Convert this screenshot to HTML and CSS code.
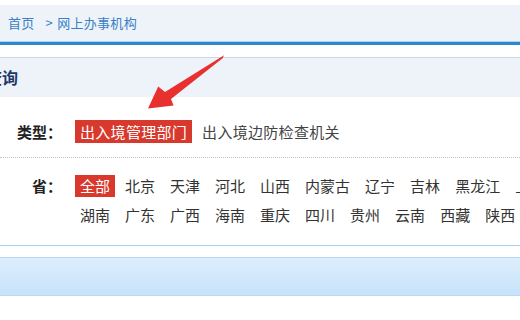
FILE: index.html
```html
<!DOCTYPE html>
<html lang="zh-CN">
<head>
<meta charset="utf-8">
<title>网上办事机构</title>
<link rel="stylesheet" href="styles.css">
</head>
<body>
<div class="page">
  <div class="crumb">
    <a class="crumb-link">首页</a><span class="crumb-sep">&gt;</span><a class="crumb-link">网上办事机构</a>
  </div>
  <div class="rule"></div>
  <div class="panel-head"><h2 class="panel-title">查询</h2></div>
  <div class="filters">
    <div class="frow frow-type">
      <div class="flabel">类型：</div>
      <div class="opts">
        <span class="opt opt-on">出入境管理部门</span>
        <span class="opt">出入境边防检查机关</span>
      </div>
    </div>
    <div class="frow frow-prov">
      <div class="flabel">省：</div>
      <div class="opts">
        <span class="opt opt-on">全部</span>
        <span class="opt">北京</span>
        <span class="opt">天津</span>
        <span class="opt">河北</span>
        <span class="opt">山西</span>
        <span class="opt">内蒙古</span>
        <span class="opt">辽宁</span>
        <span class="opt">吉林</span>
        <span class="opt">黑龙江</span>
        <span class="opt">上海</span>
        <span class="opt">江苏</span>
        <span class="opt">浙江</span>
        <span class="opt">安徽</span>
        <span class="opt">福建</span>
        <span class="opt">江西</span>
        <span class="opt">山东</span>
        <span class="opt">河南</span>
        <span class="opt">湖北</span>
        <span class="opt">湖南</span>
        <span class="opt">广东</span>
        <span class="opt">广西</span>
        <span class="opt">海南</span>
        <span class="opt">重庆</span>
        <span class="opt">四川</span>
        <span class="opt">贵州</span>
        <span class="opt">云南</span>
        <span class="opt">西藏</span>
        <span class="opt">陕西</span>
        <span class="opt">甘肃</span>
        <span class="opt">青海</span>
        <span class="opt">宁夏</span>
        <span class="opt">新疆</span>
      </div>
    </div>
  </div>
  <div class="band"></div>
  <svg class="arrow" viewBox="0 0 520 320" width="520" height="320" aria-hidden="true">
    <polygon points="224,50.3 222.6,53.2 171,94 173.6,100.6 148,103.6 158.2,81.4 165,87" fill="#e8302e"/>
  </svg>
</div>
</body>
</html>
```

FILE: styles.css
```css
html, body {
  margin: 0;
  padding: 0;
  background: #ffffff;
  overflow: hidden;
}

.page {
  position: relative;
  width: 960px;
  font-family: "Noto Sans CJK SC", "Liberation Sans", sans-serif;
  color: #333333;
}

.crumb {
  margin-top: 5px;
  height: 36px;
  line-height: 36px;
  padding-left: 8px;
  background: #eef3fa;
  font-size: 13px;
  letter-spacing: 0.3px;
  color: #3a80c4;
}

.crumb-link {
  color: #3a80c4;
  text-decoration: none;
}

.crumb-sep {
  display: inline-block;
  margin: 0 4px 0 11px;
}

.rule {
  height: 3px;
  border-top: 1px solid #a8d3f2;
  background: #2d87cd;
}

.panel-head {
  margin-top: 12px;
  border-top: 1px solid #c9d9ea;
  background: #eef3fa;
  height: 39px;
}

.panel-title {
  margin: 0 0 0 -14px;
  font-size: 16px;
  font-weight: bold;
  line-height: 39px;
  color: #1c3a68;
}

.filters {
  border-bottom: 1px solid #a9cdee;
}

.frow {
  display: flex;
  align-items: flex-start;
}

.frow-type {
  padding: 23px 0 14px;
  border-bottom: 1px dotted #c4c4c4;
}

.frow-prov {
  padding: 17px 0 12px;
}

.flabel {
  width: 62px;
  margin-right: 13px;
  text-align: right;
  font-size: 15px;
  font-weight: bold;
  color: #222222;
  flex: none;
}

.frow-type .flabel {
  line-height: 23px;
}

.frow-prov .flabel {
  line-height: 22px;
}

.opts {
  flex: 1;
  display: flex;
  flex-wrap: wrap;
}

.opt {
  padding: 0 5px;
  margin-right: 5px;
  font-size: 15px;
  color: #333333;
  white-space: nowrap;
}

.frow-type .opt {
  line-height: 23px;
  letter-spacing: 0.3px;
  color: #444444;
}

.frow-prov .opt {
  line-height: 22px;
  margin-bottom: 7px;
}

.opt-on {
  background: #d8392c;
  color: #ffffff;
}

.frow-type .opt-on {
  color: #ffffff;
}

.band {
  margin-top: 11px;
  height: 37px;
  border-top: 1px solid #b3d6f3;
  border-bottom: 1px solid #b8d8f3;
  background: linear-gradient(to bottom, #ddeefc, #c7e3fa);
}

.arrow {
  position: absolute;
  left: 0;
  top: 0;
  pointer-events: none;
}
```
